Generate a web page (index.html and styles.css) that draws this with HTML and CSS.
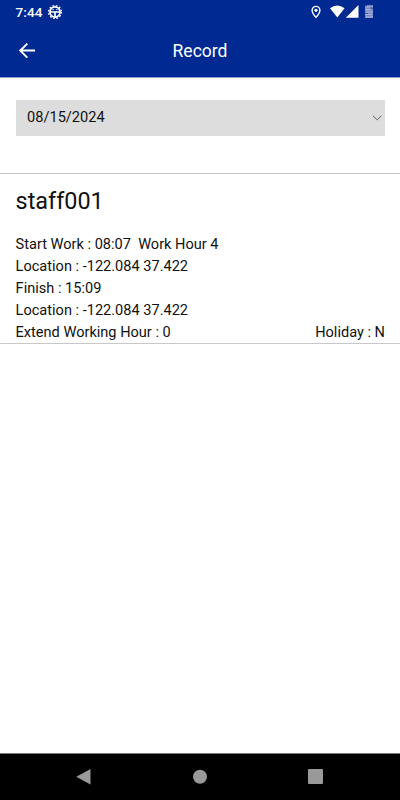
FILE: index.html
```html
<!DOCTYPE html>
<html lang="en">
<head>
<meta charset="utf-8">
<title>Record</title>
<link rel="stylesheet" href="styles.css">
</head>
<body>
<header class="top">
  <div class="status">
    <span class="clock">7:44</span>
    <svg class="gear" width="16" height="16" viewBox="0 0 16 16" fill="none" stroke="#fff">
      <circle cx="8" cy="8" r="5.1" stroke-width="1.6"/>
      <circle cx="8" cy="8" r="6.4" stroke-width="1.4" stroke-dasharray="1.7 1.651"/>
      <path d="M3 8h10M8 8v5" stroke-width="1.7"/>
      <path d="M5.5 5.7h1.3M9.2 5.7h1.3" stroke-width="1"/>
    </svg>
    <svg class="signals" width="66" height="16" viewBox="0 0 66 16">
      <path d="M6 2.4A3.9 3.9 0 0 0 2.1 6.3C2.1 9.2 6 13.3 6 13.3S9.9 9.2 9.9 6.3A3.9 3.9 0 0 0 6 2.4Z" fill="none" stroke="#fff" stroke-width="1.4"/>
      <circle cx="6" cy="6.3" r="1.6" fill="#fff"/>
      <path d="M20 4.2Q27.3-1.4 34.6 4.2L27.3 13.5Z" fill="#fff"/>
      <path d="M48.5 1V13.7H35.8Z" fill="#fff"/>
      <path d="M55 1h8v13h-8z" fill="#7887c2"/>
      <path d="M56 3h7M55 5.5h6M56 8h7M55 10.5h7M56 13h7" stroke="#b0b8dc"/>
      <path d="M55 1.5h2M60 4h3M55 9.5h3" stroke="#2b4ca7"/>
    </svg>
  </div>
  <div class="bar">
    <svg class="back" width="18" height="18" viewBox="0 0 18 18" fill="none" stroke="#fff" stroke-width="2">
      <path d="M17 8.6H3M9.3 1.6l-7 7 7 7"/>
    </svg>
    <h1 class="title">Record</h1>
  </div>
</header>
<main class="content">
  <div class="date">
    <span class="value">08/15/2024</span>
    <svg width="10" height="7" viewBox="0 0 10 7" fill="none" stroke="#555" stroke-width=".9"><path d="M1 .8l4.2 4.1L9.4.8"/></svg>
  </div>
  <section class="record">
    <h2 class="name">staff001</h2>
    <p>Start Work : 08:07&nbsp; Work Hour 4</p>
    <p>Location : -122.084 37.422</p>
    <p>Finish : 15:09</p>
    <p>Location : -122.084 37.422</p>
    <p class="split"><span>Extend Working Hour : 0</span><span>Holiday : N</span></p>
  </section>
</main>
<nav class="nav">
  <svg width="400" height="46" viewBox="0 0 400 46" fill="#999">
    <path d="M76.3 22.7L90.5 15v15.6z"/>
    <circle cx="200" cy="22.7" r="7"/>
    <rect x="308" y="15" width="15" height="15" rx="1"/>
  </svg>
</nav>
</body>
</html>
```
FILE: styles.css
```css
* { box-sizing: border-box; margin: 0; padding: 0; }
body {
  width: 400px;
  height: 800px;
  display: flex;
  flex-direction: column;
  overflow: hidden;
  background: #fff;
  color: #111;
  font-family: Roboto, sans-serif;
}
svg { display: block; flex: none; }
.top {
  height: 78px;
  background: #002991;
  border-bottom: 1px solid #8c9dcb;
  color: #fff;
}
.status {
  height: 24px;
  padding: 0 24px 0 15.6px;
  display: flex;
  align-items: center;
}
.clock { width: 31.4px; font-size: 13.6px; font-weight: 500; line-height: 24px; }
.signals { margin-left: auto; }
.bar {
  height: 53px;
  display: grid;
  grid-template-columns: 60px 1fr 60px;
  align-items: center;
}
.back { margin-left: 18px; }
.title {
  text-align: center;
  font-size: 17.5px;
  font-weight: 400;
  line-height: 24px;
}
.content { flex: 1; }
.date {
  height: 36px;
  margin: 22px 15px 37px 15.5px;
  padding: 0 3px 0 11.5px;
  display: flex;
  align-items: center;
  justify-content: space-between;
  background: #ddd;
  font-size: 14.6px;
}
.value { padding-bottom: 2px; }
.record {
  height: 171px;
  padding: 0 15px 0 15.6px;
  border-top: 1px solid #c8c8c8;
  border-bottom: 1px solid #c8c8c8;
  font-size: 14.57px;
}
.name {
  height: 59px;
  padding-top: 12px;
  font-size: 23.4px;
  font-weight: 400;
  line-height: 30px;
}
.record p { line-height: 22px; white-space: nowrap; }
.split { display: flex; justify-content: space-between; }
.nav { height: 47px; background: #000; border-top: 1px solid #777; }
```
